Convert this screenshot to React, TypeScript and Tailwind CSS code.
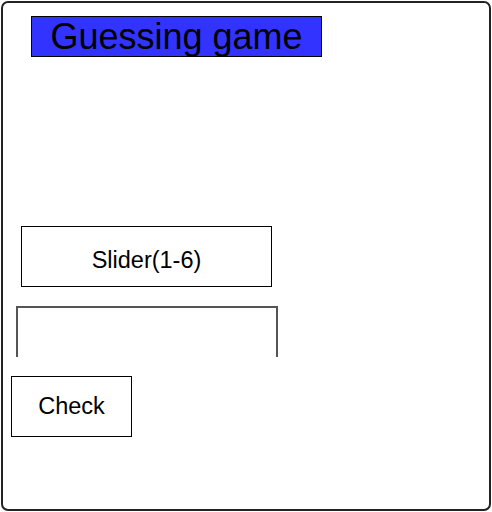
const App = () => {
    return (
        <div className="font-['Liberation_Sans',Arial,sans-serif] w-[492px] h-[512px] bg-white">
            <div className="m-px w-[490px] h-[510px] border-2 border-[#222] rounded-[7px] flex flex-col items-start">
                <div className="ml-[28px] mt-[13px] w-[291px] h-[41px] border border-black bg-[#3333ff] flex items-center justify-center">
                    <h1 className="text-[36px] leading-none text-black">Guessing game</h1>
                </div>
                <div className="ml-[18px] mt-[169px] w-[251px] h-[61px] border border-black flex items-center justify-center pt-[9px]">
                    <span className="text-[23.5px] leading-none text-black">Slider(1-6)</span>
                </div>
                <div className="ml-[13px] mt-[19px] w-[262px] h-[51px] border-t-2 border-x-2 border-[#555]"></div>
                <button type="button" className="ml-[8px] mt-[19px] w-[121px] h-[61px] border border-black flex items-center justify-center text-[23.5px] leading-none text-black">
                    Check
                </button>
            </div>
        </div>
    );
}
export default App;
